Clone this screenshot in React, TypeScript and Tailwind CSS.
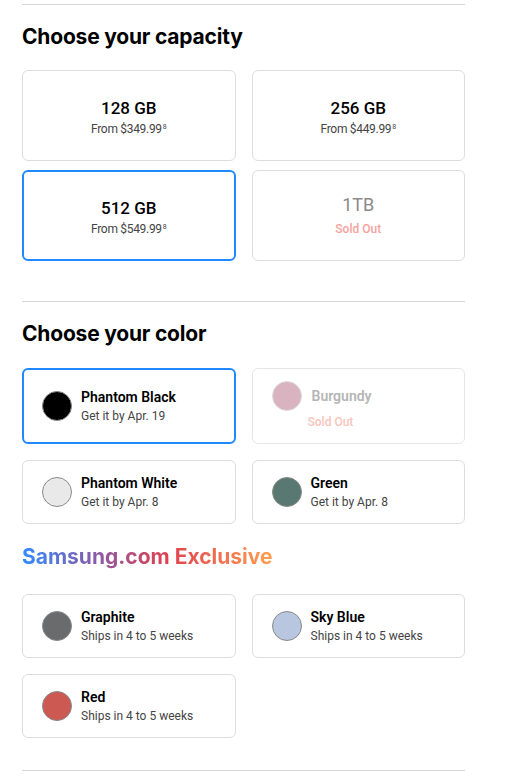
import React from "react";

const headFont = { fontFamily: "Inter, 'DejaVu Sans', sans-serif" };

type Capacity = { size: string; price?: string; soldOut?: boolean; selected?: boolean };

const capacities: Capacity[] = [
  { size: "128 GB", price: "From $349.99" },
  { size: "256 GB", price: "From $449.99" },
  { size: "512 GB", price: "From $549.99", selected: true },
  { size: "1TB", soldOut: true },
];

type Swatch = { name: string; sub?: string; color: string; soldOut?: boolean; selected?: boolean };

const colors: Swatch[] = [
  { name: "Phantom Black", sub: "Get it by Apr. 19", color: "bg-[#000000]", selected: true },
  { name: "Burgundy", color: "bg-[#d9b3bf]", soldOut: true },
  { name: "Phantom White", sub: "Get it by Apr. 8", color: "bg-[#e9e9e9]" },
  { name: "Green", sub: "Get it by Apr. 8", color: "bg-[#5a7872]" },
];

const exclusives: Swatch[] = [
  { name: "Graphite", sub: "Ships in 4 to 5 weeks", color: "bg-[#6a6b6d]" },
  { name: "Sky Blue", sub: "Ships in 4 to 5 weeks", color: "bg-[#b8c6e0]" },
  { name: "Red", sub: "Ships in 4 to 5 weeks", color: "bg-[#cc5a52]" },
];

function CapacityCard({ item }: { item: Capacity }) {
  const border = item.selected
    ? "border-2 border-[#2189ff]"
    : "border border-[#dddddd]";
  return (
    <div className={`h-[91px] rounded-[6px] ${border} flex flex-col items-center justify-center`}>
      {item.soldOut ? (
        <>
          <span className="text-[18px] leading-[22px] text-[#8a8a8a]">{item.size}</span>
          <span className="mt-[5px] text-[12px] leading-[16px] font-medium text-[#f6a19b]">Sold Out</span>
        </>
      ) : (
        <>
          <span className="pt-[3px] text-[17px] leading-[20px] font-medium text-black">{item.size}</span>
          <span className="mt-[3px] text-[12px] leading-[16px] tracking-[-0.3px] text-[#444]">
            {item.price}
            <sup className="text-[7px] ml-[1px]">8</sup>
          </span>
        </>
      )}
    </div>
  );
}

function ColorCard({ item, tall }: { item: Swatch; tall?: boolean }) {
  const border = item.selected
    ? "border-2 border-[#2189ff] pl-[18px]"
    : "border border-[#dddddd] pl-[19px]";
  const h = tall ? "h-[76px]" : "h-[64px]";
  if (item.soldOut) {
    return (
      <div className={`${h} rounded-[6px] border border-[#e6e6e6] pl-[19px] flex flex-col justify-center`}>
        <div className="flex items-center gap-[10px]">
          <div className={`w-[30px] h-[30px] rounded-full border border-[#ddd] ${item.color}`} />
          <span className="text-[14px] font-semibold text-[#b5b5b5]">{item.name}</span>
        </div>
        <span className="ml-[36px] mt-[2px] text-[12px] font-medium text-[#f9c4bc]">Sold Out</span>
      </div>
    );
  }
  return (
    <div className={`${h} rounded-[6px] ${border} flex items-center gap-[9px]`}>
      <div className={`w-[30px] h-[30px] shrink-0 rounded-full border border-[#8a8a8a] ${item.color}`} />
      <div className="flex flex-col">
        <span className="text-[14px] leading-[18px] font-semibold text-black">{item.name}</span>
        <span className="mt-[2px] text-[12px] leading-[16px] text-[#444]">{item.sub}</span>
      </div>
    </div>
  );
}

export default function App() {
  return (
    <div className="w-[518px] h-[784px] bg-white overflow-hidden" style={{ fontFamily: "Roboto, 'Liberation Sans', sans-serif" }}>
      <div className="ml-[22px] w-[443px]">
        <div className="mt-[4px] h-px bg-[#d6d6d6]" />

        <h2 style={headFont} className="mt-[18px] text-[21px] leading-[28px] font-bold tracking-[-0.2px] text-black">
          Choose your capacity
        </h2>
        <div className="mt-[19px] grid grid-cols-2 gap-x-[16px] gap-y-[9px]">
          {capacities.map((c) => (
            <CapacityCard key={c.size} item={c} />
          ))}
        </div>

        <div className="mt-[40px] h-px bg-[#d6d6d6]" />

        <h2 style={headFont} className="mt-[18px] text-[21px] leading-[28px] font-bold tracking-[-0.2px] text-black">
          Choose your color
        </h2>
        <div className="mt-[20px] grid grid-cols-2 gap-x-[16px] gap-y-[16px]">
          {colors.map((c, i) => (
            <ColorCard key={c.name} item={c} tall={i < 2} />
          ))}
        </div>

        <h2
          style={headFont}
          className="mt-[19px] inline-block text-[21px] leading-[28px] font-bold tracking-[0px] text-transparent bg-clip-text bg-[linear-gradient(90deg,#2f8cff_0%,#8a5aa6_30%,#e0404e_58%,#ff9f50_100%)]"
        >
          Samsung.com Exclusive
        </h2>
        <div className="mt-[23px] grid grid-cols-2 gap-x-[16px] gap-y-[16px]">
          {exclusives.map((c) => (
            <ColorCard key={c.name} item={c} />
          ))}
        </div>

        <div className="mt-[32px] h-px bg-[#d6d6d6]" />
      </div>
    </div>
  );
}
